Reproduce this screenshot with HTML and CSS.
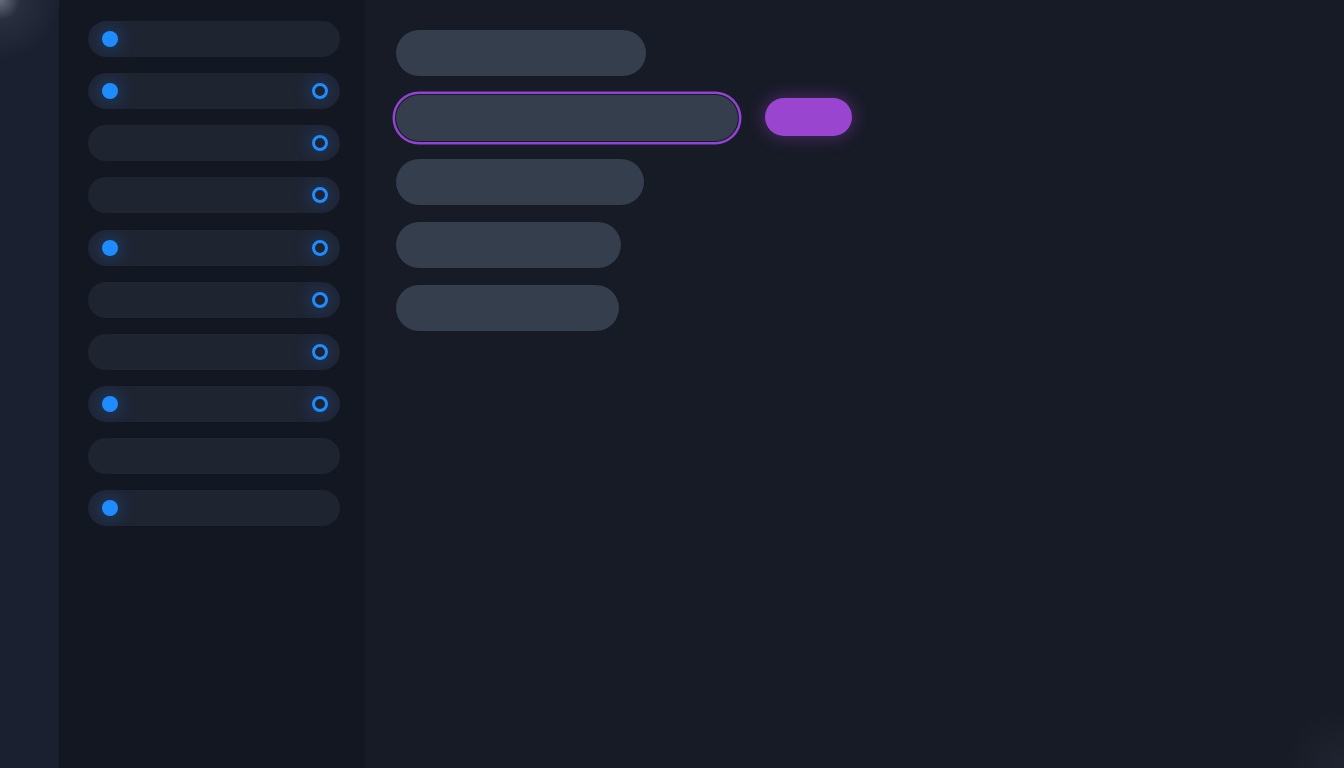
FILE: index.html
```html
<!DOCTYPE html>
<html lang="en">
<head>
<meta charset="utf-8">
<title>Panel</title>
<link rel="stylesheet" href="styles.css">
</head>
<body>
<div class="app">
  <div class="rail"></div>
  <aside class="sidebar">
    <div class="row"><span class="dot"></span></div>
    <div class="row"><span class="dot"></span><span class="ring"></span></div>
    <div class="row"><span class="ring"></span></div>
    <div class="row"><span class="ring"></span></div>
    <div class="row"><span class="dot"></span><span class="ring"></span></div>
    <div class="row"><span class="ring"></span></div>
    <div class="row"><span class="ring"></span></div>
    <div class="row"><span class="dot"></span><span class="ring"></span></div>
    <div class="row"></div>
    <div class="row"><span class="dot"></span></div>
  </aside>
  <main class="main">
    <div class="bar w1"></div>
    <div class="field-row">
      <div class="bar field"></div>
      <div class="btn"></div>
    </div>
    <div class="bar w3"></div>
    <div class="bar w4"></div>
    <div class="bar w5"></div>
  </main>
</div>
</body>
</html>
```

FILE: styles.css
```css
* { box-sizing: border-box; }
html, body { margin: 0; padding: 0; height: 100%; }
body {
  background: #171b26;
  font-family: "Inter", "Liberation Sans", sans-serif;
  overflow: hidden;
}
.app {
  display: flex;
  width: 1344px;
  height: 768px;
  position: relative;
  background:
    radial-gradient(circle at 100% 100%, rgba(120,130,150,0.09) 0, rgba(120,130,150,0) 60px),
    #171b26;
}
.rail {
  width: 59px;
  flex: none;
  background:
    radial-gradient(circle at 0 0, rgba(200,205,215,0.45) 0, rgba(140,150,165,0.12) 20px, rgba(60,66,82,0) 60px),
    #1b2030;
}
.sidebar {
  width: 306px;
  flex: none;
  background: #131722;
  padding: 21px 0 0 29px;
  display: flex;
  flex-direction: column;
  gap: 16.15px;
}
.row {
  width: 252px;
  height: 36px;
  border-radius: 18px;
  background: #1f2431;
  display: flex;
  align-items: center;
  padding: 0 12px 0 14px;
  position: relative;
  overflow: hidden;
  flex: none;
}
.dot {
  width: 16px;
  height: 16px;
  border-radius: 50%;
  background: #1e8cff;
  box-shadow: 0 0 14px 6px rgba(30,120,230,0.2);
}
.ring {
  width: 16px;
  height: 16px;
  border-radius: 50%;
  border: 3px solid #1e8cff;
  margin-left: auto;
  box-shadow: 0 0 14px 6px rgba(30,120,230,0.16);
}
.main {
  flex: 1;
  padding: 30px 0 0 31px;
  display: flex;
  flex-direction: column;
  gap: 17px;
}
.bar {
  height: 46px;
  border-radius: 23px;
  background: #353e4c;
  flex: none;
}
.w1 { width: 250px; }
.w3 { width: 248px; }
.w4 { width: 225px; }
.w5 { width: 223px; }
.field-row {
  display: flex;
  align-items: center;
  gap: 27px;
  height: 49px;
  flex: none;
}
.field {
  width: 342px;
  height: 46px;
  box-shadow: 0 0 0 1px #161a24, 0 0 0 3.5px #9242d4;
}
.btn {
  width: 87px;
  height: 38px;
  border-radius: 19px;
  background: #9a45cf;
  box-shadow: 0 0 16px 3px rgba(154,69,207,0.32);
  margin-top: -1px;
}
```
